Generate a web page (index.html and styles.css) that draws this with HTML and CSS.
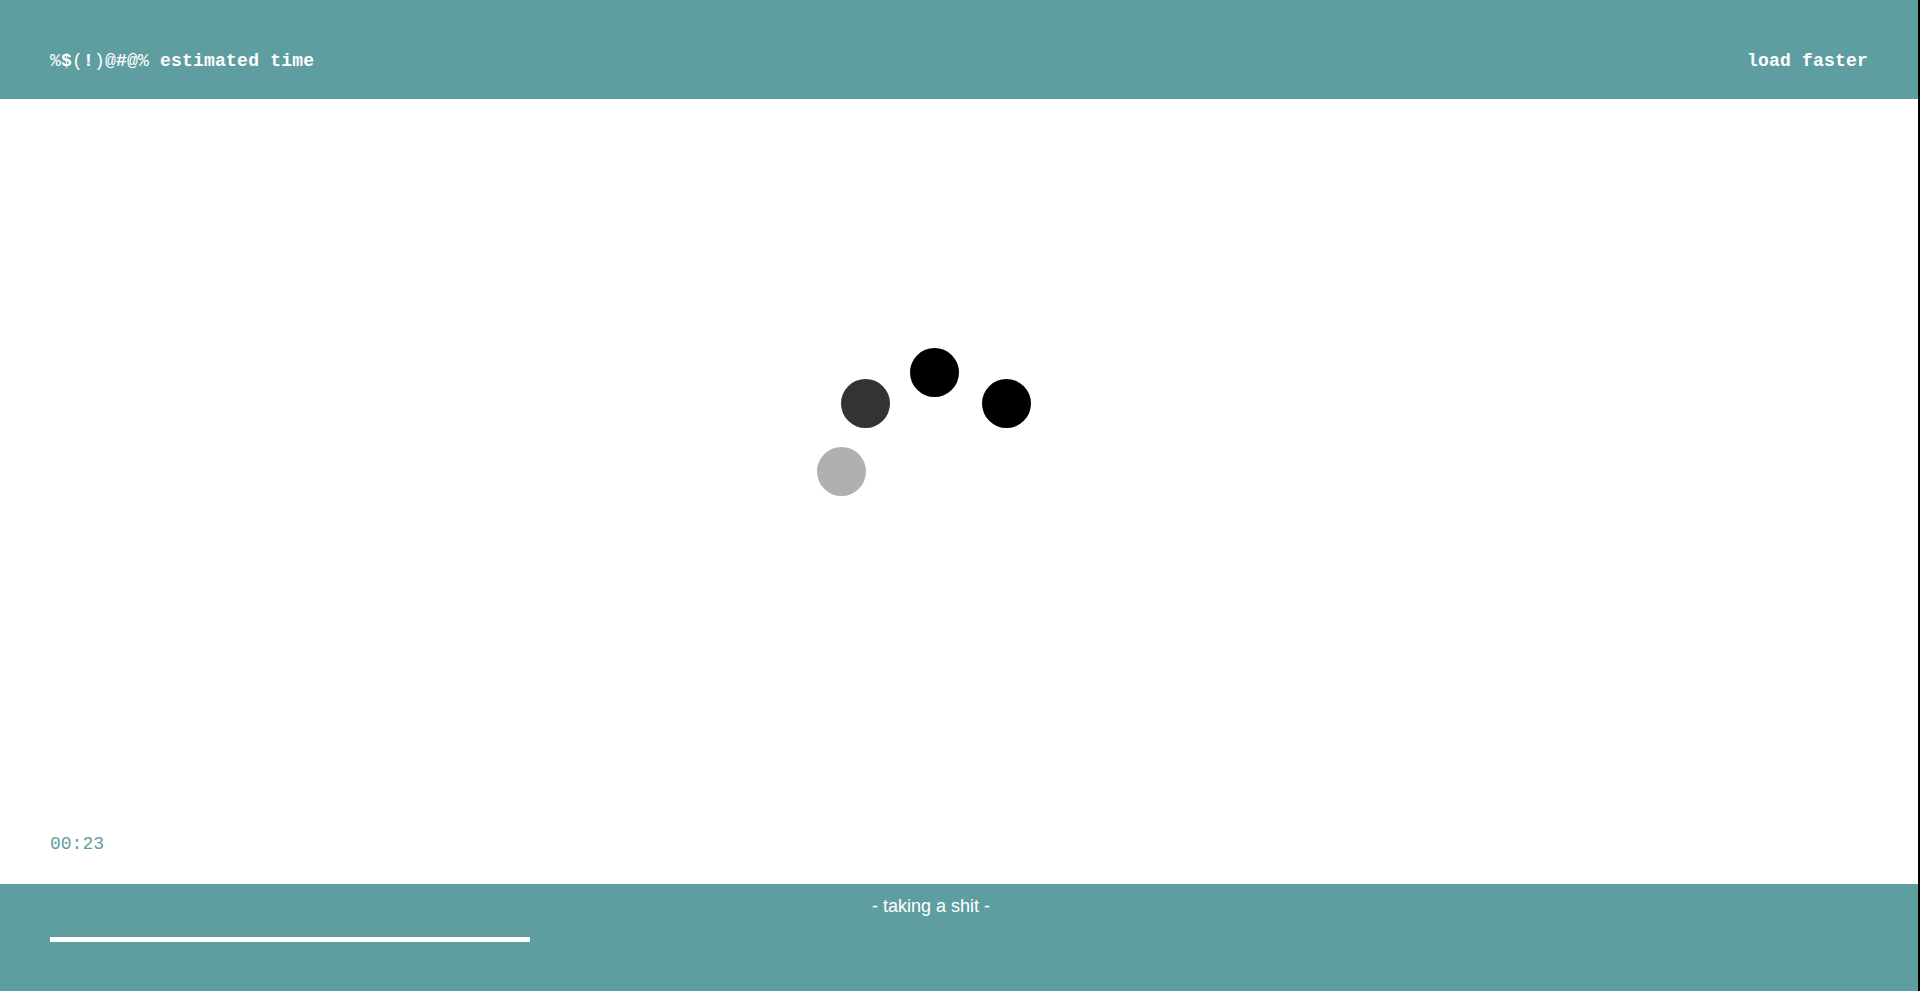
FILE: index.html
```html
<!DOCTYPE html>
<html lang="en">
<head>
<meta charset="utf-8">
<title>estimated time</title>
<link rel="stylesheet" href="styles.css">
</head>
<body>
<div class="page">
  <header class="topbar">
    <div class="title"><span class="thin">%</span>$<span class="thin">(</span>!<span class="thin">)@</span>#<span class="thin">@%</span> estimated time</div>
    <div class="action">load faster</div>
  </header>
  <main class="stage">
    <div class="spinner">
      <span class="dot dot-dark"></span>
      <span class="dot dot-top"></span>
      <span class="dot dot-right"></span>
      <span class="dot dot-light"></span>
    </div>
    <div class="timer">00:23</div>
  </main>
  <footer class="bottombar">
    <div class="status">- taking a shit -</div>
    <div class="progress"><div class="progress-fill" style="width:480px"></div></div>
  </footer>
</div>
</body>
</html>
```

FILE: styles.css
```css
html {
  background: #000;
  margin: 0;
  padding: 0;
}
body {
  margin: 0;
  width: calc(100% - 2px);
  background: #fff;
}
.page {
  display: flex;
  flex-direction: column;
  height: 100vh;
}
.topbar {
  height: 99px;
  box-sizing: border-box;
  background: #5f9ea0;
  color: #fff;
  display: flex;
  justify-content: space-between;
  align-items: flex-start;
  padding: 51px 50px 0 50px;
  font-family: "Liberation Mono", "Courier New", monospace;
  font-weight: bold;
  font-size: 18px;
  letter-spacing: 0.2px;
  white-space: pre;
}
.thin {
  font-weight: normal;
}
.stage {
  flex: 1;
  display: grid;
  position: relative;
}
.spinner {
  grid-area: 1 / 1;
  place-self: center;
  width: 0;
  height: 0;
  position: relative;
}
.dot {
  position: absolute;
  width: 49px;
  height: 49px;
  border-radius: 50%;
}
.dot-dark {
  background: #333;
  left: -118.5px;
  top: -112.5px;
}
.dot-top {
  background: #000;
  left: -49px;
  top: -143.5px;
}
.dot-right {
  background: #000;
  left: 23px;
  top: -112.5px;
}
.dot-light {
  background: #b0b0b0;
  left: -142.2px;
  top: -44.2px;
}
.timer {
  grid-area: 1 / 1;
  align-self: end;
  justify-self: start;
  margin: 0 0 30px 50px;
  color: #5f9ea0;
  font-family: "Liberation Mono", "Courier New", monospace;
  font-size: 18px;
}
.bottombar {
  height: 107px;
  box-sizing: border-box;
  background: #5f9ea0;
  padding: 12px 50px 0 50px;
}
.status {
  color: #fff;
  font-family: "Liberation Sans", Arial, sans-serif;
  font-size: 18px;
  text-align: center;
  padding-right: 56px;
  margin-left: -50px;
  margin-right: -50px;
}
.progress {
  margin-top: 20px;
  height: 5px;
}
.progress-fill {
  height: 5px;
  background: #fff;
}
```
